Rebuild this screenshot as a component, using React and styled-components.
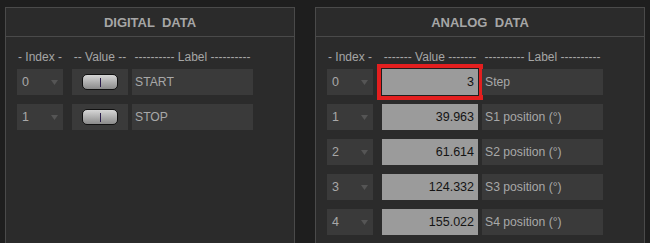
import React from "react";
import styled, { createGlobalStyle } from "styled-components";

const Global = createGlobalStyle`
  html, body { margin: 0; padding: 0; background: #1e1e1e; overflow: hidden; }
  body { font-family: "Liberation Sans", Arial, sans-serif; }
`;

const Page = styled.div`
  display: flex;
  gap: 20px;
  padding: 7px 5px 0 5px;
  height: 243px;
  box-sizing: border-box;
  overflow: hidden;
`;

const Panel = styled.section`
  width: ${(p) => p.$w}px;
  height: 260px;
  box-sizing: border-box;
  border: 1px solid #4a4a4a;
  background: #2b2b2b;
  flex: none;
`;

const PanelHeader = styled.div`
  height: 29px;
  border-bottom: 1px solid #4a4a4a;
  display: flex;
  align-items: center;
  justify-content: center;
  color: #a6a6a6;
  font-weight: bold;
  font-size: 13px;
  white-space: pre;
  padding-top: 1px;
  box-sizing: border-box;
`;

const Body = styled.div`
  padding: 12px 11px 0 11px;
  display: flex;
  flex-direction: column;
  gap: 9px;
`;

const ColHeads = styled.div`
  display: flex;
  gap: 4px;
  height: 16px;
  align-items: center;
  margin-bottom: -5px;
  color: #a6a6a6;
  font-size: 12px;
  white-space: pre;
`;

const ColHead = styled.div`
  width: ${(p) => p.$w}px;
  margin-right: ${(p) => p.$mr || 0}px;
  flex: none;
  display: flex;
  justify-content: center;
`;

const Row = styled.div`
  display: flex;
  gap: 4px;
  height: 26px;
`;

const IndexBox = styled.div`
  width: 46px;
  margin-right: 5px;
  background: #3a3a3a;
  display: flex;
  align-items: center;
  justify-content: space-between;
  padding: 0 5px 0 5px;
  box-sizing: border-box;
  color: #a8a8a8;
  font-size: 12.5px;
`;

const Arrow = styled.svg`
  width: 7px;
  height: 5px;
  margin-top: 1px;
  fill: #555;
`;

const ValueCell = styled.div`
  width: ${(p) => p.$w}px;
  background: ${(p) => (p.$gray ? "#9b9b9b" : "#3a3a3a")};
  display: flex;
  align-items: center;
  justify-content: ${(p) => (p.$gray ? "flex-end" : "center")};
  padding-right: ${(p) => (p.$gray ? 4 : 0)}px;
  box-sizing: border-box;
  color: #141414;
  font-size: 12.5px;
  box-shadow: ${(p) =>
    p.$selected ? "0 0 0 1px #1e1e1e, 0 0 0 5px #e41f1f" : "none"};
`;

const Toggle = styled.div`
  width: 36px;
  height: 16px;
  box-sizing: border-box;
  border: 1px solid #111;
  border-radius: 5px;
  background: linear-gradient(#d6d6d6, #a8a8a8 60%, #8a8a8a);
  display: flex;
  align-items: center;
  justify-content: center;
`;

const Notch = styled.span`
  width: 1px;
  height: 9px;
  background: #2a1c4a;
`;

const LabelCell = styled.div`
  width: 121px;
  background: #3a3a3a;
  display: flex;
  align-items: center;
  padding-left: 3px;
  box-sizing: border-box;
  color: #a8a8a8;
  font-size: 12.2px;
`;

const digital = [
  { i: 0, label: "START" },
  { i: 1, label: "STOP" },
];

const analog = [
  { i: 0, v: "3", label: "Step", sel: true },
  { i: 1, v: "39.963", label: "S1 position (°)" },
  { i: 2, v: "61.614", label: "S2 position (°)" },
  { i: 3, v: "124.332", label: "S3 position (°)" },
  { i: 4, v: "155.022", label: "S4 position (°)" },
];

function Heads({ valueW, valueText }) {
  return (
    <ColHeads>
      <ColHead $w={46} $mr={5}>- Index -</ColHead>
      <ColHead $w={valueW}>{valueText}</ColHead>
      <ColHead $w={121}>---------- Label ----------</ColHead>
    </ColHeads>
  );
}

function IndexSelect({ value }) {
  return (
    <IndexBox>
      {value}
      <Arrow viewBox="0 0 7 5">
        <polygon points="0,0 7,0 3.5,5" />
      </Arrow>
    </IndexBox>
  );
}

export default function App() {
  return (
    <>
      <Global />
      <Page>
        <Panel $w={290}>
          <PanelHeader>DIGITAL  DATA</PanelHeader>
          <Body>
            <Heads valueW={56} valueText="-- Value --" />
            {digital.map((r) => (
              <Row key={r.i}>
                <IndexSelect value={r.i} />
                <ValueCell $w={56}>
                  <Toggle>
                    <Notch />
                  </Toggle>
                </ValueCell>
                <LabelCell>{r.label}</LabelCell>
              </Row>
            ))}
          </Body>
        </Panel>
        <Panel $w={330}>
          <PanelHeader>ANALOG  DATA</PanelHeader>
          <Body>
            <Heads valueW={96} valueText="------- Value -------" />
            {analog.map((r) => (
              <Row key={r.i}>
                <IndexSelect value={r.i} />
                <ValueCell $w={96} $gray $selected={r.sel}>
                  {r.v}
                </ValueCell>
                <LabelCell>{r.label}</LabelCell>
              </Row>
            ))}
          </Body>
        </Panel>
      </Page>
    </>
  );
}
